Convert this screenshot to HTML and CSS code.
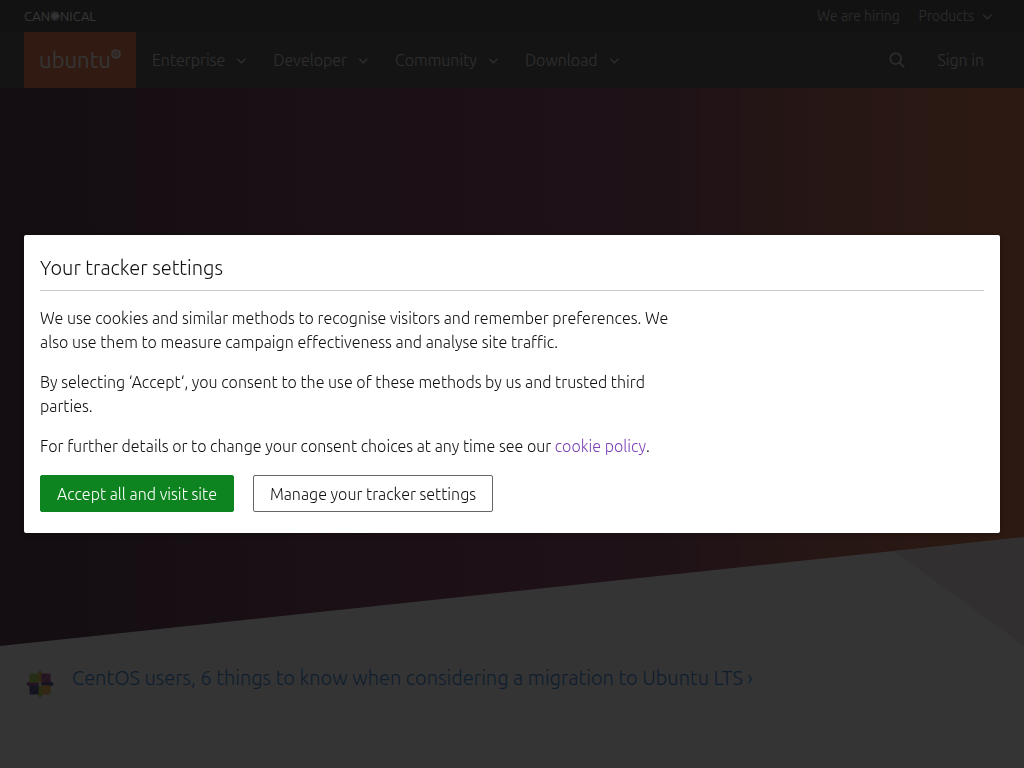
FILE: index.html
```html
<!DOCTYPE html>
<html lang="en">
<head>
    <meta charset="UTF-8">
    <meta name="viewport" content="width=device-width, initial-scale=1.0">
    <title>Enterprise Open Source and Linux | Ubuntu</title>
    <link rel="stylesheet" href="styles.css">
</head>
<body>

<svg class="sprite" aria-hidden="true">
    <symbol id="chevron" viewBox="0 0 16 16">
        <path d="M4.2 6.8L8.300 10.800l4.100-4" fill="none" stroke="currentColor" stroke-width="1.2"/>
    </symbol>
</svg>

<div class="global-nav">
    <a class="canonical-logo" href="#" aria-label="Canonical">
        <span>CAN</span>
        <svg width="10" height="10" viewBox="0 0 11 11">
            <circle cx="5.5" cy="5.5" r="3.4" fill="currentColor"/>
            <circle cx="5.5" cy="5.5" r="4.4" fill="none" stroke="currentColor" stroke-width="1.8" stroke-dasharray="1 0.73"/>
        </svg>
        <span>NICAL</span>
    </a>
    <div class="global-links">
        <a href="#">We are hiring</a>
        <button type="button" class="products">Products <svg class="chevron"><use href="#chevron"/></svg></button>
    </div>
</div>

<header class="navigation">
    <a class="ubuntu-logo" href="#" aria-label="Ubuntu">
        <span>ubuntu</span>
        <svg width="10" height="10" viewBox="0 0 10 10">
            <circle cx="5" cy="5" r="4.8" fill="currentColor"/>
            <circle cx="5" cy="5" r="2.1" fill="none" stroke="#e95420" stroke-width="1"/>
            <circle cx="2.3" cy="5" r="0.7" fill="#e95420"/>
            <circle cx="6.4" cy="2.7" r="0.7" fill="#e95420"/>
            <circle cx="6.4" cy="7.3" r="0.7" fill="#e95420"/>
        </svg>
    </a>
    <nav class="nav-links">
        <a href="#">Enterprise <svg class="chevron"><use href="#chevron"/></svg></a>
        <a href="#">Developer <svg class="chevron"><use href="#chevron"/></svg></a>
        <a href="#">Community <svg class="chevron"><use href="#chevron"/></svg></a>
        <a href="#">Download <svg class="chevron"><use href="#chevron"/></svg></a>
    </nav>
    <div class="nav-right">
        <button type="button" class="search" aria-label="Search">
            <svg width="16" height="16" viewBox="0 0 16 16" fill="none" stroke="currentColor" stroke-width="1.6">
                <circle cx="6.7" cy="6.7" r="5.4"/>
                <path d="M10.600 10.600l4.600 4.600"/>
            </svg>
        </button>
        <a href="#">Sign in</a>
    </div>
</header>

<main>
    <section class="hero">
        <div class="hero-shade"></div>
        <div class="hero-suru"></div>
    </section>

    <section class="takeover">
        <svg width="32" height="32" viewBox="0 0 32 32">
            <path d="M5.500 5.500h9.500v9.500H5.500z" fill="#9ccd2a"/>
            <path d="M17 5.500h9.500v9.500H17z" fill="#932279"/>
            <path d="M5.500 17h9.500v9.500H5.500z" fill="#262577"/>
            <path d="M17 17h9.500v9.500H17z" fill="#efa724"/>
            <path d="M16 2l3 3.500h-1.500V13L16 15l-1.500-2V5.500H13z" fill="#efa724"/>
            <path d="M30 16l-3.500 3v-1.800H18L16.500 16l1.500-1.200h8.500V13z" fill="#262577"/>
            <path d="M16 30l-3-3.500h1.500V19L16 17l1.500 2v7.500H19z" fill="#9ccd2a"/>
            <path d="M2 16l3.500-3v1.800H14l1.500 1.200-1.500 1.200H5.500V19z" fill="#932279"/>
            <path d="M15 15L6 6M17 15l9-9M15 17l-9 9M17 17l9 9" stroke="#fff" stroke-width="0.5" opacity="0.7"/>
        </svg>
        <h3><a href="#">CentOS users, 6 things to know when considering a migration to Ubuntu LTS&nbsp;›</a></h3>
    </section>
</main>

<div class="modal">
    <div class="modal-dialog" role="dialog" aria-labelledby="modal-title">
        <h2 id="modal-title">Your tracker settings</h2>
        <div class="modal-text">
            <p>We use cookies and similar methods to recognise visitors and remember preferences. We also use them to measure campaign effectiveness and analyse site traffic.</p>
            <p>By selecting ‘Accept‘, you consent to the use of these methods by us and trusted third parties.</p>
            <p>For further details or to change your consent choices at any time see our <a href="#">cookie policy</a>.</p>
        </div>
        <div class="modal-buttons">
            <button type="button" class="btn btn-positive">Accept all and visit site</button>
            <button type="button" class="btn">Manage your tracker settings</button>
        </div>
    </div>
</div>

</body>
</html>
```
FILE: styles.css
```css
* {
    box-sizing: border-box;
}

body {
    margin: 0;
    min-height: 100vh;
    background: #fff;
    color: #111;
    font-family: Ubuntu, "Open Sans", "Noto Sans", sans-serif;
    font-size: 16px;
    font-weight: 300;
    line-height: 24px;
}

a {
    color: inherit;
    text-decoration: none;
}

button {
    font: inherit;
    color: inherit;
    background: none;
    border: none;
    padding: 0;
    cursor: pointer;
}

.sprite {
    display: none;
}

.chevron {
    width: 16px;
    height: 16px;
}

/* top bar */
.global-nav {
    display: flex;
    justify-content: space-between;
    align-items: center;
    height: 32px;
    padding: 0 29px 0 24px;
    background: #1e1e1e;
    color: #d0d0d0;
    font-size: 14px;
}

.canonical-logo {
    display: flex;
    align-items: center;
    color: #fff;
    font-size: 13px;
    font-weight: 400;
}

.global-links {
    display: flex;
    gap: 19px;
}

.products {
    display: flex;
    align-items: center;
    gap: 5px;
}

/* main navigation */
.navigation {
    display: flex;
    height: 56px;
    padding: 0 24px;
    background: #2c2c2c;
    color: #d8d8d8;
}

.ubuntu-logo {
    display: flex;
    justify-content: center;
    width: 112px;
    background: #e95420;
    color: #fff;
    font-size: 22px;
    font-weight: 400;
    line-height: 56px;
}

.ubuntu-logo svg {
    margin-top: 17px;
}

.nav-links {
    display: flex;
    align-items: center;
    gap: 24px;
    padding-left: 16px;
}

.nav-links a {
    display: flex;
    align-items: center;
    gap: 8px;
}

.nav-right {
    display: flex;
    align-items: center;
    gap: 32px;
    margin-left: auto;
    padding-right: 16px;
}

.search {
    display: flex;
}

/* hero */
.hero {
    position: relative;
    height: 558px;
}

.hero-shade {
    height: 100%;
    background: linear-gradient(90deg, #2c001e 0%, #2c001e 8%, #4a0c30 25%, #68153f 50%, #6e1c40 64%, #9c3830 78%, #b54422 90%, #cb4f1e 100%);
    clip-path: polygon(0 0, 100% 0, 100% 80.5%, 0 100%);
}

.hero-suru {
    position: absolute;
    inset: 0;
    background: #ebdfe4;
    clip-path: polygon(87.3% 83%, 100% 80.5%, 100% 100%);
}

.takeover {
    display: flex;
    gap: 16px;
    padding: 22px 24px;
}

.takeover h3 {
    margin: 0;
    color: #06c;
    font-size: 20px;
    font-weight: 300;
    line-height: 20px;
}

/* tracker modal */
.modal {
    position: fixed;
    inset: 0;
    display: flex;
    align-items: center;
    justify-content: center;
    padding: 24px;
    background: rgba(17, 17, 17, 0.85);
}

.modal-dialog {
    width: 100%;
    padding: 16px 16px 21px;
    background: #fff;
    border-radius: 2px;
    box-shadow: 0 1px 5px 1px rgba(0, 0, 0, 0.2);
}

.modal-dialog h2 {
    margin: 0 0 15px;
    padding: 5px 0 10px;
    border-bottom: 1px solid #cdcdcd;
    font-size: 20px;
    font-weight: 300;
    line-height: 24px;
}

.modal-text {
    max-width: 640px;
    margin-bottom: 17px;
}

.modal-text p {
    margin: 0 0 16px;
}

.modal-text a {
    color: #7d42b8;
}

.modal-buttons {
    display: flex;
    gap: 19px;
}

.btn {
    height: 37px;
    padding: 1px 16px 0;
    border: 1px solid #666;
    border-radius: 2px;
}

.btn-positive {
    background: #0e8420;
    border-color: #0e8420;
    color: #fff;
}
```
